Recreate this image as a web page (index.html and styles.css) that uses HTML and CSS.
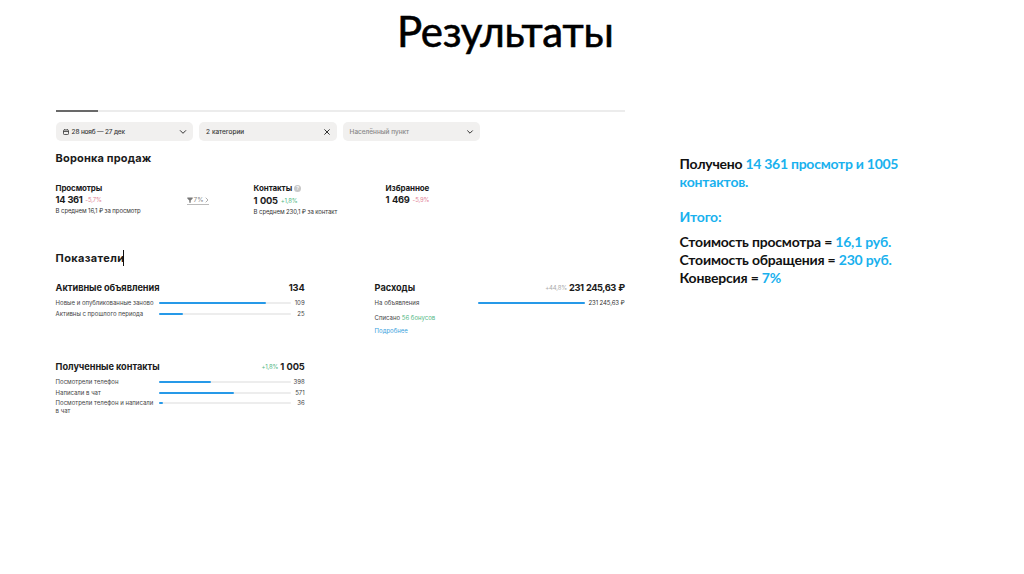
FILE: index.html
```html
<!DOCTYPE html>
<html lang="ru">
<head>
<meta charset="utf-8">
<title>Результаты</title>
<link rel="stylesheet" href="styles.css">
</head>
<body>
<main class="slide">
  <h1 class="title">Результаты</h1>
  <div class="content">
    <section class="dashboard">
      <div class="tabs"><div class="tab-active"></div></div>
      <div class="filters">
        <div class="filter">
          <svg class="calendar" viewBox="0 0 6 6"><rect x=".5" y="1" width="5" height="4.5" rx=".8"/><path d="M.5 2.5h5M1.7 0v1M4.3 0v1"/></svg>
          <span class="date">28 нояб — 27 дек</span>
          <svg class="arrow" viewBox="0 0 8 6"><path d="M1 1.3l3 3 3-3"/></svg>
        </div>
        <div class="filter">
          <span class="category">2 категории</span>
          <svg class="arrow" viewBox="0 0 8 6"><path d="M1.4.4l5.2 5.2M6.6.4L1.4 5.6"/></svg>
        </div>
        <div class="filter">
          <span class="place">Населённый пункт</span>
          <svg class="arrow" viewBox="0 0 8 6"><path d="M1.3 1.5l2.7 2.7 2.7-2.7"/></svg>
        </div>
      </div>
      <h2 class="heading funnel-heading">Воронка продаж</h2>
      <div class="metrics">
        <div class="metric views">
          <h3 class="label">Просмотры</h3>
          <div class="value"><b>14 361</b><span class="delta down">-5,7%</span></div>
          <p class="note">В среднем 16,1 ₽ за просмотр</p>
        </div>
        <div class="conversion">
          <svg class="funnel" viewBox="0 0 6 6"><path d="M.3.5h5.4v1L3.7 3.4v2.3H2.3V3.4L.3 1.5z"/></svg>
          <span>7%</span>
          <svg class="next" viewBox="0 0 4 6"><path d="M.7.7L3 3 .7 5.3"/></svg>
        </div>
        <div class="metric contacts">
          <h3 class="label">Контакты<span class="help">?</span></h3>
          <div class="value"><b>1 005</b><span class="delta up">+1,8%</span></div>
          <p class="note">В среднем 230,1 ₽ за контакт</p>
        </div>
        <div class="metric favorites">
          <h3 class="label">Избранное</h3>
          <div class="value"><b>1 469</b><span class="delta down">-5,9%</span></div>
        </div>
      </div>
      <h2 class="heading stats-heading">Показатели<span class="caret"></span></h2>
      <div class="stats">
        <article class="stat">
          <header class="stat-head"><h3 class="ads">Активные объявления</h3><b>134</b></header>
          <div class="row"><span class="name new">Новые и опубликованные заново</span><div class="track"><div class="fill" style="width:81.5%"></div></div><span class="num">109</span></div>
          <div class="row"><span class="name old">Активны с прошлого периода</span><div class="track"><div class="fill" style="width:18.7%"></div></div><span class="num">25</span></div>
        </article>
        <article class="stat">
          <header class="stat-head"><h3 class="spend">Расходы</h3><span class="delta flat">+44,8%</span><b class="sum">231 245,63 ₽</b></header>
          <div class="row"><span class="name">На объявления</span><div class="track cost"><div class="fill" style="width:100%"></div></div><span class="num">231 245,63 ₽</span></div>
          <p class="bonus">Списано <span>56 бонусов</span></p>
          <a class="more">Подробнее</a>
        </article>
        <article class="stat">
          <header class="stat-head"><h3 class="received">Полученные контакты</h3><span class="delta up">+1,8%</span><b>1 005</b></header>
          <div class="row"><span class="name">Посмотрели телефон</span><div class="track"><div class="fill" style="width:39.6%"></div></div><span class="num">398</span></div>
          <div class="row"><span class="name">Написали в чат</span><div class="track"><div class="fill" style="width:56.8%"></div></div><span class="num">571</span></div>
          <div class="row"><span class="name both">Посмотрели телефон и написали<br>в чат</span><div class="track"><div class="fill" style="width:3.6%"></div></div><span class="num">36</span></div>
        </article>
      </div>
    </section>
    <aside class="summary">
      <p class="wide">Получено <span>14 361 просмотр и 1005</span></p>
      <p><span>контактов.</span></p>
      <p class="total"><span>Итого:</span></p>
      <p>Стоимость просмотра = <span>16,1 руб.</span></p>
      <p>Стоимость обращения = <span>230 руб.</span></p>
      <p>Конверсия = <span>7%</span></p>
    </aside>
  </div>
</main>
</body>
</html>
```
FILE: styles.css
```css
* { box-sizing: border-box; margin: 0; }
body { background: #fff; color: #1b1b1b; font-family: Inter, "Noto Sans", sans-serif; }
svg { fill: none; stroke: #333; stroke-width: 1; flex: none; }
.slide { width: 1024px; height: 574px; overflow: hidden; }
.title { height: 110px; padding: 3px 0 0 397px; font: 400 42px/56px Lato, Carlito, "Open Sans", sans-serif; letter-spacing: -.25px; color: #000; -webkit-text-stroke: .6px #000; white-space: nowrap; }
.content { display: flex; padding-left: 56px; }
.dashboard { width: 569px; margin-left: -.4px; white-space: nowrap; }
.tabs { height: 2px; background: #ececec; }
.tab-active { width: 42px; height: 2px; background: #696969; }
.filters { display: flex; gap: 6px; margin-top: 10px; }
.filter { display: flex; align-items: center; width: 137.5px; height: 19px; padding: 0 6px 0 7px; background: #f1f0ef; border-radius: 5px; font-size: 6.5px; color: #333; -webkit-text-stroke: .1px; }
.calendar { width: 6px; height: 6px; margin-right: 3px; stroke-width: .8; }
.date { letter-spacing: -.18px; }
.arrow { width: 8px; height: 6px; margin-left: auto; }
.place { color: #858585; }
.heading { font-size: 11px; line-height: 16px; font-weight: 700; letter-spacing: .15px; }
.funnel-heading { margin-top: 9px; }
.metrics { display: flex; height: 58px; margin-top: 17px; }
.views { width: 131px; }
.label { display: flex; align-items: center; font-size: 8px; line-height: 10px; height: 10px; letter-spacing: -.1px; }
.views .label { letter-spacing: -.15px; }
.value { display: flex; align-items: center; gap: 3px; height: 14px; font-size: 9.3px; line-height: 14px; letter-spacing: -.4px; }
.value b { word-spacing: .6px; }
.contacts .value, .favorites .value { letter-spacing: -.25px; }
.delta { font-size: 6px; font-weight: 400; letter-spacing: -.15px; }
.down { color: #e28396; }
.up { color: #52b884; }
.flat { color: #aaa; }
.note { font-size: 6px; line-height: 8px; letter-spacing: -.09px; color: #333; }
.conversion { display: flex; align-items: center; gap: 1px; width: 22px; height: 9px; margin-top: 13px; border-bottom: 1px solid #bbb; font-size: 6.5px; color: #888; }
.funnel { width: 6px; height: 6px; fill: #777; stroke: none; }
.next { width: 4px; height: 6px; stroke: #999; stroke-width: .8; margin-left: auto; }
.contacts { width: 132px; margin-left: 45px; }
.contacts .value { margin-top: 1px; }
.help { display: grid; place-items: center; width: 7px; height: 7px; margin-left: 2px; border-radius: 50%; background: #c8c8c8; color: #fff; font-size: 5px; line-height: 7px; }
.stats-heading { display: flex; align-items: center; margin-top: 9px; letter-spacing: .35px; }
.caret { width: 1px; height: 16px; margin-left: -1px; background: #111; }
.stats { display: grid; grid-template-columns: 249px 250px; grid-template-rows: 79px 60px; column-gap: 70px; margin-top: 15px; }
.stat-head { display: flex; align-items: center; height: 14px; margin-bottom: 4px; font-size: 9.3px; line-height: 14px; }
.stat-head h3 { font-size: 9.2px; letter-spacing: -.04px; margin-right: auto; }
.stat-head b { margin-left: 2px; letter-spacing: -.15px; word-spacing: .4px; }
.stat-head .sum { letter-spacing: -.45px; word-spacing: .6px; }
.row { display: flex; align-items: flex-start; height: 10.7px; font-size: 6px; line-height: 8px; color: #444; }
.name { width: 103px; }
.track { width: 132px; height: 2px; margin-top: 3px; background: #ededed; border-radius: 1px; }
.cost { width: 107px; }
.cost + .num { letter-spacing: -.1px; color: #333; }
.fill { height: 2px; background: #2699e8; border-radius: 1px; }
.num { margin-left: auto; }
.bonus { margin-top: 4px; font-size: 6px; line-height: 8px; color: #444; }
.bonus span { color: #52b884; }
.more { display: block; margin-top: 5px; font-size: 6px; line-height: 8px; color: #3ba2dd; }
.summary { margin: 44.5px 0 0 55px; font: 700 14px/18px Lato, Carlito, "Open Sans", sans-serif; letter-spacing: -.2px; color: #111; white-space: nowrap; }
.wide { letter-spacing: -.26px; }
.summary span { color: #19b1ee; }
.total { margin: 17.5px 0 7px; }
```
